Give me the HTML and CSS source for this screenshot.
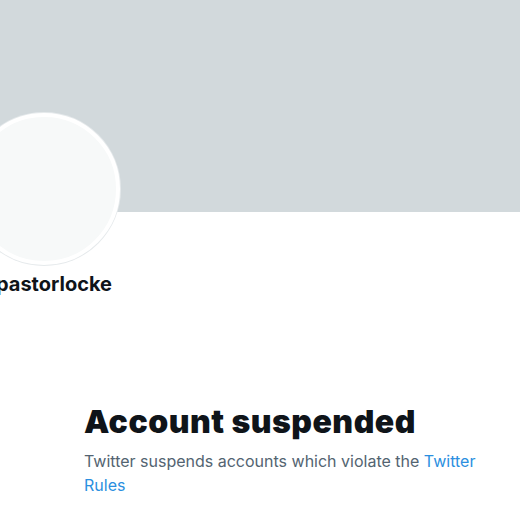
FILE: index.html
```html
<!DOCTYPE html>
<html>
<head>
<meta charset="utf-8">
<link rel="stylesheet" href="styles.css">
</head>
<body>
<div class="page">
  <div class="banner"></div>
  <div class="profile">
    <div class="avatar"></div>
    <div class="username">pastorlocke</div>
  </div>
  <div class="notice">
    <h1 class="title">Account suspended</h1>
    <p class="desc">Twitter suspends accounts which violate the <a class="link" href="#">Twitter Rules</a></p>
  </div>
</div>
</body>
</html>
```
FILE: styles.css
```css
html, body {
  margin: 0;
  padding: 0;
  background: #ffffff;
}
body {
  font-family: Inter, "Liberation Sans", Arial, sans-serif;
  overflow: hidden;
}
.page {
  width: 520px;
  height: 520px;
  overflow: hidden;
}
.banner {
  height: 212px;
  background: #d2d9dc;
}
.profile {
  display: flex;
  flex-direction: column;
}
.avatar {
  width: 144px;
  height: 144px;
  margin-top: -99px;
  margin-left: -32px;
  border-radius: 50%;
  background: #f7f9f9;
  border: 4px solid #ffffff;
  box-shadow: 0 0 0 1px #e6eaec;
}
.username {
  margin-top: 7px;
  margin-left: -4px;
  font-size: 20px;
  line-height: 24px;
  font-weight: 700;
  color: #0f1419;
  letter-spacing: 0;
}
.notice {
  padding-left: 84px;
  padding-top: 108px;
  padding-right: 30px;
}
.title {
  margin: 0;
  font-size: 32px;
  line-height: 36px;
  font-weight: 900;
  color: #0f1419;
  letter-spacing: 0.5px;
}
.desc {
  margin: 9px 0 0;
  font-size: 16px;
  line-height: 24px;
  color: #536471;
}
.link {
  color: #2b8fe0;
  text-decoration: none;
}
```
